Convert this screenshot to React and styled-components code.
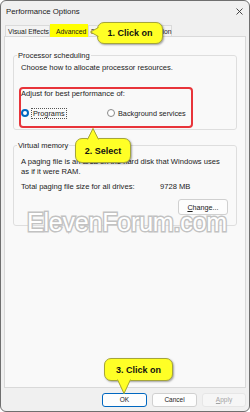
import React from 'react';
import styled, { createGlobalStyle } from 'styled-components';

const GlobalStyle = createGlobalStyle`
  html, body { margin: 0; padding: 0; background: #ffffff; }
  body { font-family: "Liberation Sans", Arial, sans-serif; }
`;

const Window = styled.div`
  position: relative;
  box-sizing: border-box;
  width: 250px;
  height: 412px;
  border: 1px solid #6f6f6f;
  border-radius: 6px;
  background: #f0f0f0;
  display: flex;
  flex-direction: column;
  overflow: hidden;
  color: #1b1b1b;
`;

const TitleBar = styled.div`
  flex: none;
  height: 20px;
  display: flex;
  align-items: center;
  justify-content: space-between;
  padding: 0 6px 0 5px;
  font-size: 7.8px;
`;

const TabRow = styled.div`
  flex: none;
  height: 15px;
  display: flex;
  align-items: flex-end;
  padding-left: 4px;
  position: relative;
  z-index: 1;
`;

const Tab = styled.div`
  box-sizing: border-box;
  height: ${p => (p.$active ? 13 : 11)}px;
  margin-bottom: ${p => (p.$active ? -1 : 0)}px;
  width: ${p => p.$w}px;
  padding-left: ${p => (p.$active ? 5 : 2)}px;
  display: flex;
  align-items: center;
  font-size: 6.8px;
  white-space: nowrap;
  background: ${p => (p.$active ? '#ffff00' : '#f3f3f3')};
  border: 1px solid ${p => (p.$active ? '#ffff00' : '#dadada')};
  border-bottom: none;
`;

const Panel = styled.div`
  flex: 1;
  margin: 0 3px;
  padding: 14px 8px 0 8px;
  background: #f9f9f9;
  border: 1px solid #d9d9d9;
  display: flex;
  flex-direction: column;
`;

const Group = styled.fieldset`
  margin: ${p => p.$top || 0}px 0 0 0;
  padding: 0 8px ${p => p.$bottom}px 7px;
  border: 1px solid #dedede;
  border-radius: 3px;
  min-width: 0;
`;

const Legend = styled.legend`
  margin-left: -4px;
  padding: 0 1px;
  font-size: 7.5px;
  line-height: 9px;
  color: #222;
`;

const Line = styled.div`
  font-size: 7.6px;
  line-height: 10px;
  white-space: nowrap;
  margin-top: ${p => p.$mt || 0}px;
`;

const Highlight = styled.div`
  box-sizing: border-box;
  width: 174px;
  margin: 14px 0 0 -2px;
  padding: 0 0 8px 0;
  border: 2px solid #e8343a;
  border-radius: 4px;
`;

const RadioRow = styled.div`
  display: grid;
  grid-template-columns: 86px auto;
  margin-top: 9px;
  height: 10px;
  align-items: center;
`;

const RadioItem = styled.label`
  display: flex;
  align-items: center;
  gap: 3px;
  font-size: 7.3px;
  white-space: nowrap;
`;

const RadioDot = styled.span`
  box-sizing: border-box;
  width: 8px;
  height: 8px;
  border-radius: 50%;
  background: #ffffff;
  border: ${p => (p.$on ? '2.5px solid #0067c0' : '1px solid #8a8a8a')};
`;

const FocusLabel = styled.span`
  padding: 0 1px;
  outline: 1px dotted #555;
  outline-offset: 0;
`;

const SizeRow = styled.div`
  display: grid;
  grid-template-columns: 139px auto;
  font-size: 7.6px;
  line-height: 10px;
  margin-top: 5px;
`;

const ButtonRow = styled.div`
  display: flex;
  justify-content: flex-end;
  margin-top: 7px;
`;

const Button = styled.div`
  box-sizing: border-box;
  width: ${p => p.$w}px;
  height: ${p => p.$h || 14}px;
  display: flex;
  align-items: center;
  justify-content: center;
  font-size: ${p => p.$fs || 6.5}px;
  border-radius: 3px;
  background: ${p => (p.$disabled ? '#f6f6f6' : '#fdfdfd')};
  color: ${p => (p.$disabled ? '#a3a3a3' : '#1b1b1b')};
  border: 1px solid ${p => (p.$primary ? '#0067c0' : p.$disabled ? '#e6e6e6' : '#d0d0d0')};
  u { text-decoration: underline; }
`;

const Footer = styled.div`
  flex: none;
  height: 23px;
  display: flex;
  justify-content: flex-end;
  align-items: center;
  gap: 5px;
  padding-right: 3px;
`;

const Watermark = styled.div`
  position: absolute;
  left: 26px;
  top: 209px;
  font-size: 25px;
  line-height: 1;
  letter-spacing: -0.2px;
  color: #ffffff;
  -webkit-text-stroke: 2.8px #c2c2c2;
  paint-order: stroke fill;
  pointer-events: none;
  white-space: nowrap;
`;

const Bubble = styled.div`
  position: absolute;
  box-sizing: border-box;
  left: ${p => p.$x}px;
  top: ${p => p.$y}px;
  width: ${p => p.$w}px;
  height: ${p => p.$h}px;
  background: #ffff26;
  border: 1px solid #a5a53a;
  border-radius: 7px;
  box-shadow: 1px 1px 2px rgba(0, 0, 0, 0.35);
  display: flex;
  align-items: center;
  justify-content: center;
  font-weight: bold;
  font-size: 9px;
  color: #111;
  white-space: nowrap;
  z-index: 3;
`;

const Pointer = styled.svg`
  position: absolute;
  left: ${p => p.$x}px;
  top: ${p => p.$y}px;
  overflow: visible;
`;

function CloseIcon() {
  return (
    <svg width="7" height="7" viewBox="0 0 7 7">
      <path d="M0.5 0.5 L6.5 6.5 M6.5 0.5 L0.5 6.5" stroke="#333" strokeWidth="0.9" />
    </svg>
  );
}

export default function App() {
  return (
    <>
      <GlobalStyle />
      <Window>
        <TitleBar>
          <span>Performance Options</span>
          <CloseIcon />
        </TitleBar>
        <TabRow>
          <Tab $w={45}>Visual Effects</Tab>
          <Tab $w={38} $active>Advanced</Tab>
          <Tab $w={84}>Data Execution Prevention</Tab>
        </TabRow>
        <Panel>
          <Group $bottom={1}>
            <Legend>Processor scheduling</Legend>
            <Line $mt={3}>Choose how to allocate processor resources.</Line>
            <Highlight>
              <Line>Adjust for best performance of:</Line>
              <RadioRow>
                <RadioItem>
                  <RadioDot $on />
                  <FocusLabel>Programs</FocusLabel>
                </RadioItem>
                <RadioItem>
                  <RadioDot />
                  <span>Background services</span>
                </RadioItem>
              </RadioRow>
            </Highlight>
          </Group>
          <Group $top={11} $bottom={10}>
            <Legend>Virtual memory</Legend>
            <Line $mt={7}>A paging file is an area on the hard disk that Windows uses</Line>
            <Line>as if it were RAM.</Line>
            <SizeRow>
              <span>Total paging file size for all drives:</span>
              <span>9728 MB</span>
            </SizeRow>
            <ButtonRow>
              <Button $w={50} $h={16} $fs={7.2}><span><u>C</u>hange...</span></Button>
            </ButtonRow>
          </Group>
        </Panel>
        <Footer>
          <Button $w={45} $primary>OK</Button>
          <Button $w={45}>Cancel</Button>
          <Button $w={44} $disabled><span><u>A</u>pply</span></Button>
        </Footer>

        <Watermark>ElevenForum.com</Watermark>

        <Bubble $x={96} $y={21} $w={66} $h={22}>
          <Pointer $x={-8} $y={4} width="9" height="10" viewBox="0 0 9 10">
            <polygon points="9,0 0,5 9,10" fill="#ffff26" />
            <polyline points="8.5,0.5 0.5,5 8.5,9.5" fill="none" stroke="#a5a53a" strokeWidth="1" />
          </Pointer>
          1. Click on
        </Bubble>

        <Bubble $x={74} $y={137} $w={56} $h={25}>
          <Pointer $x={11} $y={-11} width="12" height="12" viewBox="0 0 12 12">
            <polygon points="0,12 6,0 12,12" fill="#ffff26" />
            <polyline points="0.5,11.5 6,0.5 11.5,11.5" fill="none" stroke="#a5a53a" strokeWidth="1" />
          </Pointer>
          2. Select
        </Bubble>

        <Bubble $x={103} $y={357} $w={69} $h={23}>
          <Pointer $x={12} $y={20} width="15" height="15" viewBox="0 0 15 15">
            <polygon points="0,0 7,15 14,0" fill="#ffff26" />
            <polyline points="0.5,0.5 7,14.5 13.5,0.5" fill="none" stroke="#a5a53a" strokeWidth="1" />
          </Pointer>
          3. Click on
        </Bubble>
      </Window>
    </>
  );
}
